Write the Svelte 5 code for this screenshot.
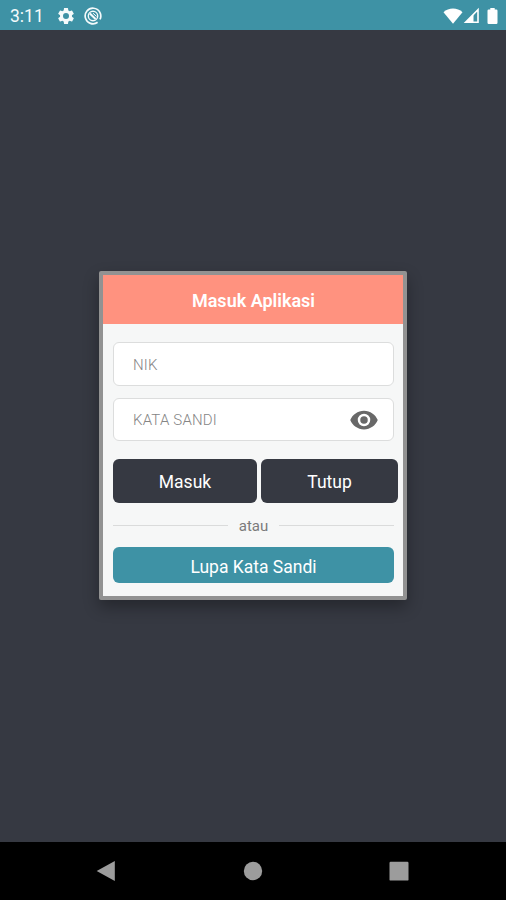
<script lang="ts">
  let nik = $state("");
  let password = $state("");
  let visible = $state(false);
</script>

<div class="screen">
  <header class="status">
    <span class="clock">3:11</span>
    <svg class="gear" width="20" height="20" viewBox="0 0 24 24" fill="currentColor">
      <path d="M19.14 12.94c.04-.3.06-.61.06-.94s-.02-.64-.07-.94l2.03-1.58a.49.49 0 0 0 .12-.61l-1.92-3.32a.49.49 0 0 0-.59-.22l-2.39.96a7 7 0 0 0-1.62-.94l-.36-2.54a.48.48 0 0 0-.48-.41h-3.84c-.24 0-.43.17-.47.41l-.36 2.54c-.59.24-1.13.57-1.62.94l-2.39-.96a.48.48 0 0 0-.59.22L2.74 8.87a.48.48 0 0 0 .12.61l2.03 1.58a7.6 7.6 0 0 0 0 1.88l-2.03 1.58a.49.49 0 0 0-.12.61l1.92 3.32c.12.22.37.29.59.22l2.39-.96c.5.38 1.03.7 1.62.94l.36 2.54c.05.24.24.41.48.41h3.84c.24 0 .44-.17.47-.41l.36-2.54a7 7 0 0 0 1.62-.94l2.39.96c.22.08.47 0 .59-.22l1.92-3.32a.48.48 0 0 0-.12-.61zM12 15.6a3.6 3.6 0 1 1 0-7.2 3.6 3.6 0 0 1 0 7.2z" />
    </svg>
    <svg class="sync" width="18" height="18" viewBox="0 0 18 18" fill="none" stroke="currentColor">
      <path d="M13.600 15.300A7.800 7.800 0 1 1 16 12.400" stroke-width="1.700" />
      <circle cx="9" cy="9" r="4.700" stroke-width="1.400" />
      <path d="M5.800 6.600l5.800 5.400" stroke-width="2" />
      <path d="M9 6.200l3.500 3.200" stroke-width="1" />
    </svg>
    <div class="signals">
      <svg width="20" height="16" viewBox="0 0 20 16" fill="currentColor">
        <path d="M10 15.800L.5 4.200C3 2 6.500.6 10 .6s7 1.400 9.500 3.600z" />
      </svg>
      <svg width="17" height="17" viewBox="0 0 17 17" fill="none" stroke="currentColor">
        <path d="M2.600 15.200H15V2.600z" stroke-width="1.600" />
        <path d="M2 15.800L10.500 7.200v8.600z" fill="currentColor" stroke="none" />
      </svg>
      <svg class="battery" width="11" height="18" viewBox="0 0 11 18" fill="currentColor">
        <path d="M3.300 1h4.400v1.500h1.600q1.200 0 1.200 1.200v12.100q0 1.200-1.200 1.200H1.700Q.5 17 .5 15.800V3.700q0-1.200 1.200-1.200h1.600z" />
      </svg>
    </div>
  </header>

  <main>
    <form class="dialog" onsubmit={(e) => e.preventDefault()}>
      <h1>Masuk Aplikasi</h1>
      <div class="body">
        <div class="field">
          <input type="text" placeholder="NIK" bind:value={nik} />
        </div>
        <div class="field second">
          <input type={visible ? "text" : "password"} placeholder="KATA SANDI" bind:value={password} />
          <button class="eye" type="button" aria-label="Lihat kata sandi" onclick={() => (visible = !visible)}>
            <svg width="30" height="30" viewBox="0 0 24 24" fill="currentColor">
              <path d="M12 4.500C7 4.500 2.730 7.610 1 12c1.730 4.390 6 7.500 11 7.500s9.270-3.110 11-7.500c-1.730-4.390-6-7.500-11-7.500zM12 17a5 5 0 1 1 0-10 5 5 0 0 1 0 10zm0-8a3 3 0 1 0 0 6 3 3 0 0 0 0-6z" />
            </svg>
          </button>
        </div>
        <div class="actions">
          <button class="btn" type="submit">Masuk</button>
          <button class="btn" type="button">Tutup</button>
        </div>
        <div class="or"><span>atau</span></div>
        <button class="btn forgot" type="button">Lupa Kata Sandi</button>
      </div>
    </form>
  </main>

  <nav>
    <svg width="20" height="22" viewBox="0 0 20 22"><path d="M.7 11L18.800.9v20.200z" /></svg>
    <svg width="20" height="22" viewBox="0 0 20 22"><circle cx="10" cy="11" r="9.200" /></svg>
    <svg width="20" height="22" viewBox="0 0 20 22"><rect x=".5" y="1.800" width="19" height="18.800" rx="1.200" /></svg>
  </nav>
</div>

<style>
  :global(body) {
    margin: 0;
    background: #363942;
  }
  .screen {
    height: 900px;
    display: flex;
    flex-direction: column;
    background: #363942;
    font-family: Roboto, sans-serif;
  }
  .status {
    height: 30px;
    box-sizing: border-box;
    display: flex;
    align-items: center;
    padding: 1px 8px 0 10px;
    background: #3e92a5;
    color: #f4fafb;
  }
  .clock {
    width: 46px;
    font-size: 17.5px;
  }
  .sync {
    margin-left: 8px;
  }
  .signals {
    display: flex;
    align-items: center;
    margin-left: auto;
    color: #fff;
  }
  .battery {
    margin-left: 7px;
  }
  main {
    flex: 1;
    display: flex;
    flex-direction: column;
    align-items: center;
    padding-top: 241px;
  }
  .dialog {
    width: 308px;
    height: 329px;
    box-sizing: border-box;
    border: 4px solid #929292;
    border-radius: 2px;
    background: #f6f7f7;
    box-shadow: 0 7px 16px rgba(0, 0, 0, 0.32);
  }
  h1 {
    height: 49px;
    margin: 0;
    padding-left: 1px;
    background: #ff927f;
    color: #fff;
    font-size: 18px;
    font-weight: 600;
    line-height: 52px;
    text-align: center;
  }
  .body {
    padding: 18px 5px 0 10px;
  }
  .field {
    width: 281px;
    height: 44px;
    box-sizing: border-box;
    display: flex;
    align-items: center;
    padding: 0 14px 0 19px;
    border: 1px solid #dcdddd;
    border-radius: 6px;
    background: #fff;
  }
  .second {
    height: 43px;
    margin-top: 12px;
  }
  input {
    flex: 1;
    min-width: 0;
    padding: 1px 0 0;
    border: 0;
    outline: 0;
    background: none;
    font: 300 15px Roboto, sans-serif;
    letter-spacing: 0.2px;
    color: #444;
  }
  input::placeholder {
    color: #858585;
    opacity: 1;
  }
  button {
    padding: 0;
    border: 0;
    font-family: inherit;
  }
  .eye {
    height: 30px;
    background: none;
    color: #686868;
  }
  .actions {
    display: grid;
    grid-template-columns: 144px 137px;
    gap: 4px;
    margin-top: 18px;
  }
  .btn {
    height: 44px;
    padding-top: 2px;
    border-radius: 6px;
    background: #363942;
    color: #fff;
    font-size: 17.5px;
  }
  .or {
    width: 281px;
    height: 44px;
    display: flex;
    align-items: center;
    gap: 11px;
    color: #7b7b7b;
    font-size: 15px;
  }
  .or span {
    padding-top: 2px;
  }
  .or::before,
  .or::after {
    content: "";
    flex: 1;
    height: 1px;
    background: #dadbdb;
  }
  .forgot {
    width: 281px;
    height: 36px;
    padding-top: 3px;
    background: #3e92a5;
  }
  nav {
    height: 58px;
    display: flex;
    justify-content: space-between;
    align-items: center;
    box-sizing: border-box;
    padding: 0 97px 0 96px;
    background: #000;
    fill: #9c9c9c;
  }
</style>
